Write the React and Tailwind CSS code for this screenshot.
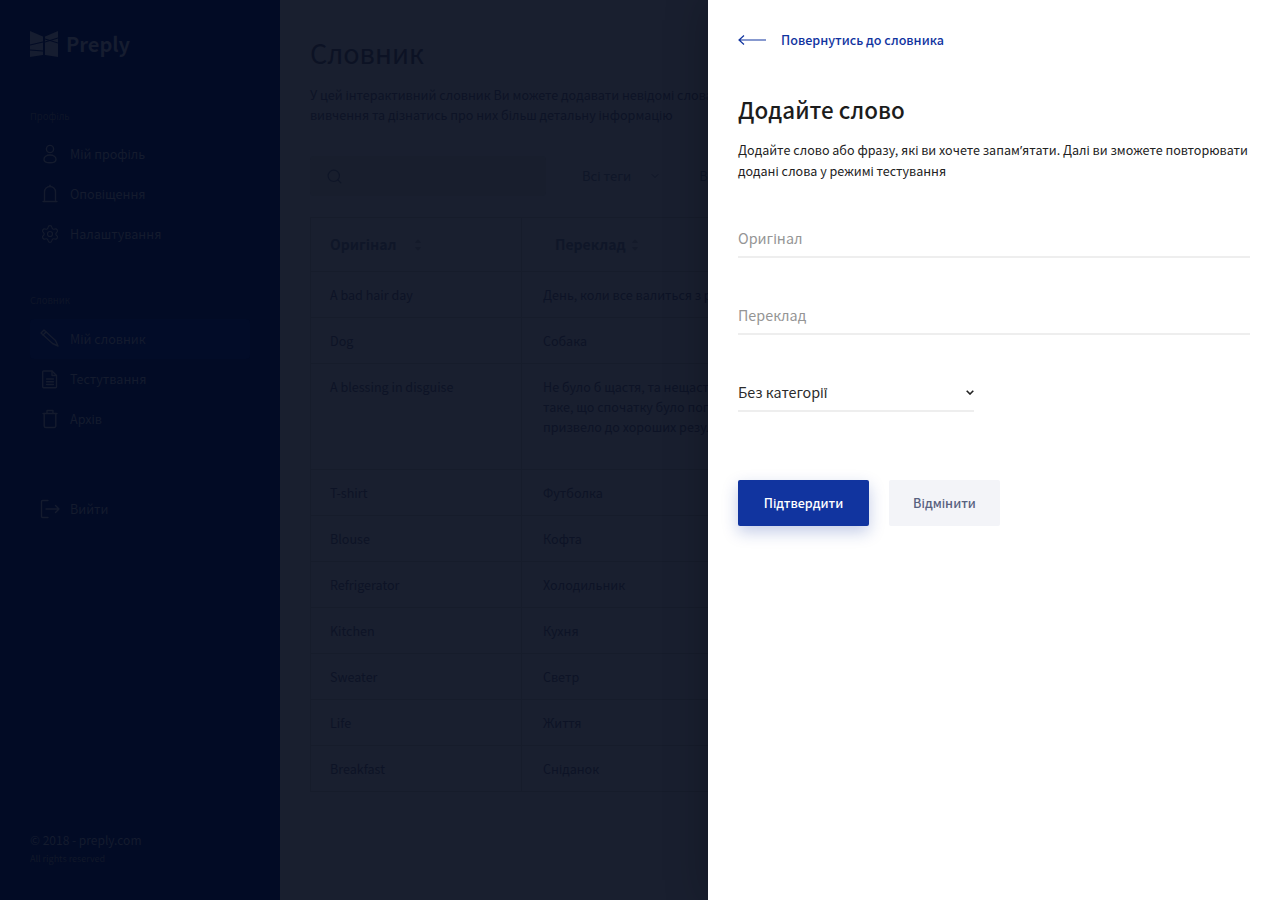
import React from 'react';
import { Settings, Search, ChevronDown } from 'lucide-react';

const font = { fontFamily: '"Noto Sans CJK SC", "Noto Sans", sans-serif' };

const rows = [
    { orig: 'A bad hair day', tr: ['День, коли все валиться з рук'], h: 'h-[46px]' },
    { orig: 'Dog', tr: ['Собака'], h: 'h-[46px]' },
    { orig: 'A blessing in disguise', tr: ['Не було б щастя, та нещастя помогло;', 'таке, що спочатку було поганим, але', 'призвело до хороших результатів'], h: 'h-[106px]' },
    { orig: 'T-shirt', tr: ['Футболка'], h: 'h-[46px]' },
    { orig: 'Blouse', tr: ['Кофта'], h: 'h-[46px]' },
    { orig: 'Refrigerator', tr: ['Холодильник'], h: 'h-[46px]' },
    { orig: 'Kitchen', tr: ['Кухня'], h: 'h-[46px]' },
    { orig: 'Sweater', tr: ['Светр'], h: 'h-[46px]' },
    { orig: 'Life', tr: ['Життя'], h: 'h-[46px]' },
    { orig: 'Breakfast', tr: ['Сніданок'], h: 'h-[46px]' },
];

function Icon({ children }) {
    return (
        <svg width="20" height="20" viewBox="0 0 20 20" fill="none" stroke="#141b2e" strokeWidth="1.4" strokeLinecap="round" strokeLinejoin="round">
            {children}
        </svg>
    );
}

const UserIcon = () => (
    <Icon>
        <circle cx="10" cy="5" r="3.6" />
        <path d="M10 11c-3.600 0-6 1.800-6 4.200S6.400 18.800 10 18.800s6-1.200 6-3.600S13.600 11 10 11z" />
    </Icon>
);
const BellIcon = () => (
    <Icon>
        <path d="M4.500 17.500V8a5.500 5.500 0 0 1 11 0v9.500" />
        <path d="M3 17.500h14" />
        <path d="M10 2.500V1.200" />
    </Icon>
);
const PencilIcon = () => (
    <Icon>
        <path d="M1 4l3-3 11.500 10.500 2.500 5.500-5.500-2.500z" />
        <path d="M3 6l3-3" />
    </Icon>
);
const DocIcon = () => (
    <Icon>
        <path d="M3.500 2h8.500l4.500 4.500V18a.8.8 0 0 1-.8.8H3.500a.8.8 0 0 1-.8-.8V2.800a.8.8 0 0 1 .8-.8z" />
        <path d="M12 2v4.500h4.500" />
        <path d="M6.500 10h7M6.500 12.800h7M6.500 15.500h7" />
    </Icon>
);
const TrashIcon = () => (
    <Icon>
        <path d="M3 4.500h14" />
        <path d="M7 4.500V1.500h6v3" />
        <path d="M4.200 4.500V17a1.500 1.500 0 0 0 1.500 1.500h8.600a1.500 1.500 0 0 0 1.500-1.500V4.500" />
    </Icon>
);
const ExitIcon = () => (
    <svg width="20" height="20" viewBox="0 0 20 20" fill="none" stroke="#141b2e" strokeWidth="1.4" strokeLinecap="round" strokeLinejoin="round">
        <path d="M8 1.500H2.500a1 1 0 0 0-1 1v15a1 1 0 0 0 1 1H8" />
        <path d="M6 10h13M15.500 6.500L19 10l-3.500 3.500" />
    </svg>
);

function Logo() {
    return (
        <svg width="28" height="26" viewBox="0 0 28 26" fill="#161d30">
            <path d="M0 0l13 5.500V24L0 26z" />
            <path d="M28 0L15 5.500V24l13 2z" />
            <path d="M0 14l13-3M0 19l13 1M15 8l13 4M15 11l13-4" stroke="#020b25" strokeWidth="1" fill="none" />
        </svg>
    );
}

function NavItem({ icon, label, active }) {
    return (
        <div className={`flex items-center h-10 w-[220px] pl-[10px] gap-[10px] rounded ${active ? 'bg-[#020c28]' : ''}`}>
            <span className="flex w-[20px] justify-center">{icon}</span>
            <span className="text-[12.55px] leading-5 text-[#141b2e]">{label}</span>
        </div>
    );
}

function SortIcon() {
    return (
        <svg width="8" height="14" viewBox="0 0 8 14" fill="#141a2a">
            <path d="M4 1.500L7 5H1zM4 12.500L1 9h6z" />
        </svg>
    );
}

function Sidebar() {
    return (
        <aside className="w-[280px] h-[900px] shrink-0 bg-[#020b25] flex flex-col pl-[30px] pt-[31px]">
            <div className="flex items-center gap-[8px] h-[26px]">
                <Logo />
                <span className="text-[20px] leading-7 font-bold text-[#161d30]">Preply</span>
            </div>
            <p className="mt-[51px] text-[9.5px] leading-4 text-[#0e1528]">Профіль</p>
            <div className="mt-[10px]">
                <NavItem icon={<UserIcon />} label="Мій профіль" />
                <NavItem icon={<BellIcon />} label="Оповіщення" />
                <NavItem icon={<Settings size={20} stroke="#141b2e" strokeWidth={1.4} />} label="Налаштування" />
            </div>
            <p className="mt-[38px] text-[9.5px] leading-4 text-[#0e1528]">Словник</p>
            <div className="mt-[11px]">
                <NavItem icon={<PencilIcon />} label="Мій словник" active />
                <NavItem icon={<DocIcon />} label="Тестутвання" />
                <NavItem icon={<TrashIcon />} label="Архів" />
            </div>
            <div className="mt-[50px]">
                <NavItem icon={<ExitIcon />} label="Вийти" />
            </div>
            <div className="mt-auto mb-[33px]">
                <p className="text-[12px] leading-4 text-[#141b2e]">© 2018 - preply.com</p>
                <p className="mt-[3px] text-[9px] leading-4 text-[#111829]">All rights reserved</p>
            </div>
        </aside>
    );
}

function Dictionary() {
    return (
        <main className="w-[428px] shrink-0 h-[900px] bg-[#191f2f] pl-[30px] pt-[35px] overflow-hidden">
            <h1 className="text-[27px] leading-9 text-[#0c1224]">Словник</h1>
            <p className="mt-[14px] w-[560px] text-[12.55px] leading-5 text-[#0d1326] whitespace-nowrap">
                У цей інтерактивний словник Ви можете додавати невідомі слова для
                <br />
                вивчення та дізнатись про них більш детальну інформацію
            </p>
            <div className="mt-[30px] w-[700px] flex items-center h-[42px] whitespace-nowrap">
                <div className="w-[236px] h-[40px] shrink-0 flex items-center pl-[16px] rounded bg-[#181e2d]">
                    <Search size={17} stroke="#0f1628" strokeWidth={1.6} />
                </div>
                <div className="ml-[36px] flex items-center gap-[18px]">
                    <span className="text-[13px] text-[#0f1628]">Всі теги</span>
                    <ChevronDown size={12} stroke="#0f1628" />
                </div>
                <span className="ml-[38px] text-[13px] text-[#0f1628]">Всі</span>
            </div>
            <div className="mt-[20px] w-[700px] border-t border-l border-[#161c2b]">
                <div className="flex h-[54px] border-b border-[#161c2b]">
                    <div className="w-[211px] shrink-0 flex items-center pl-[19px] border-r border-[#161c2b]">
                        <span className="text-[14px] font-bold text-[#0f1628]">Оригінал</span>
                        <span className="ml-[18px]"><SortIcon /></span>
                    </div>
                    <div className="flex items-center pl-[33px]">
                        <span className="text-[14px] font-bold text-[#0f1628]">Переклад</span>
                        <span className="ml-[6px]"><SortIcon /></span>
                    </div>
                </div>
                {rows.map((row) => (
                    <div key={row.orig} className={`flex ${row.h} border-b border-[#161c2b] text-[12.55px] leading-5 text-[#0d1326]`}>
                        <div className="w-[211px] shrink-0 pl-[19px] pt-[13px] border-r border-[#161c2b]">{row.orig}</div>
                        <div className="pl-[21px] pt-[13px] whitespace-nowrap">
                            {row.tr.map((line) => (
                                <div key={line}>{line}</div>
                            ))}
                        </div>
                    </div>
                ))}
            </div>
        </main>
    );
}

function Field({ label }) {
    return (
        <div className="h-[77px] flex flex-col justify-end">
            <div className="border-b-2 border-[#eeeeee] h-[31px] pt-[1px] text-[14.35px] leading-5 text-[#959595]">{label}</div>
        </div>
    );
}

function Panel() {
    return (
        <section className="absolute top-0 right-0 w-[572px] h-[900px] bg-white px-[30px] pt-[30px] shadow-[0_0_40px_rgba(0,0,0,0.25)]">
            <div className="flex items-center gap-[15px] h-5">
                <svg width="28" height="12" viewBox="0 0 28 12" fill="none" stroke="#11349f" strokeWidth="1.2">
                    <path d="M1 6h27M6 1.500L1 6l5 4.500" />
                </svg>
                <span className="text-[12.55px] leading-5 font-medium text-[#11349f]">Повернутись до словника</span>
            </div>
            <h2 className="mt-[43px] text-[22.4px] leading-8 font-medium text-[#1c1c1c]">Додайте слово</h2>
            <p className="mt-[15px] text-[12.55px] leading-5 text-[#222222] whitespace-nowrap">
                Додайте слово або фразу, які ви хочете запам<span className="font-['Noto_Sans']">’</span>ятати. Далі ви зможете повторювати
                <br />
                додані слова у режимі тестування
            </p>
            <div>
                <Field label="Оригінал" />
                <Field label="Переклад" />
            </div>
            <div className="mt-[47px] w-[236px] h-[30px] flex items-start justify-between border-b-2 border-[#eeeeee]">
                <span className="text-[14.35px] leading-5 text-[#2b2b2b]">Без категорії</span>
                <svg width="8" height="5" viewBox="0 0 8 5" fill="none" stroke="#222222" strokeWidth="1.6" className="mt-[8px]">
                    <path d="M.7.7L4 4l3.300-3.300" />
                </svg>
            </div>
            <div className="mt-[68px] flex gap-[20px]">
                <button className="w-[131px] h-[46px] rounded-[2px] bg-[#11349f] text-white text-[12.55px] font-medium shadow-[0_6px_16px_rgba(17,52,159,0.25)]">Підтвердити</button>
                <button className="w-[111px] h-[46px] rounded-[2px] bg-[#f3f4f8] text-[#58617f] text-[12.55px] font-medium">Відмінити</button>
            </div>
        </section>
    );
}

export default function App() {
    return (
        <div className="relative flex w-[1280px] h-[900px] overflow-hidden" style={font}>
            <Sidebar />
            <Dictionary />
            <Panel />
        </div>
    );
}
